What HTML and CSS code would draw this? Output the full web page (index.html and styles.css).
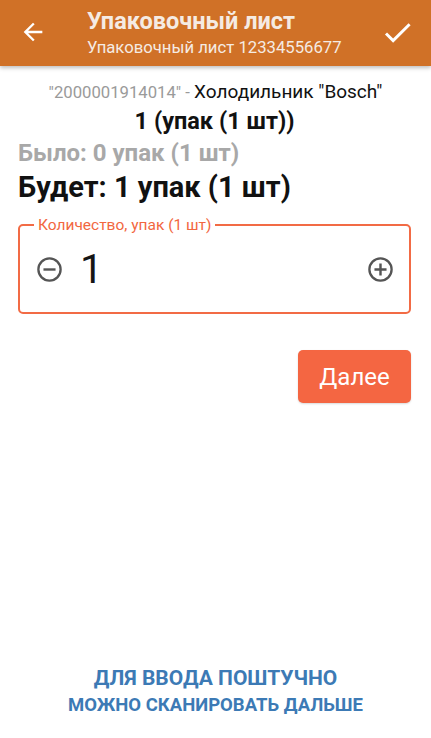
FILE: index.html
```html
<!DOCTYPE html>
<html lang="ru">
<head>
<meta charset="utf-8">
<link rel="stylesheet" href="styles.css">
</head>
<body>
<div class="app">
  <header class="bar">
    <svg class="back" viewBox="0 0 24 24" width="28" height="28"><path d="M20 11H7.83l5.59-5.59L12 4l-8 8 8 8 1.41-1.41L7.83 13H20v-2z" fill="#fff"/></svg>
    <div class="titles">
      <div class="title">Упаковочный лист</div>
      <div class="subtitle">Упаковочный лист 12334556677</div>
    </div>
    <svg class="check" viewBox="0 0 24 24" width="35" height="35"><path d="M9 16.17L4.83 12l-1.42 1.41L9 19 21 7l-1.41-1.41z" fill="#fff"/></svg>
  </header>
  <main class="content">
    <div class="product"><span class="code">"2000001914014" - </span>Холодильник "Bosch"</div>
    <div class="qty">1 (упак (1 шт))</div>
    <div class="was">Было: 0 упак (1 шт)</div>
    <div class="will">Будет: 1 упак (1 шт)</div>
    <div class="field">
      <span class="label">Количество, упак (1 шт)</span>
      <svg viewBox="0 0 24 24" width="29" height="29"><circle cx="12" cy="12" r="9.2" fill="none" stroke="#555" stroke-width="1.9"/><path d="M7 12h10" stroke="#555" stroke-width="2"/></svg>
      <span class="value">1</span>
      <svg viewBox="0 0 24 24" width="29" height="29"><circle cx="12" cy="12" r="9.2" fill="none" stroke="#555" stroke-width="1.9"/><path d="M7 12h10M12 7v10" stroke="#555" stroke-width="2"/></svg>
    </div>
    <div class="actions"><button class="next">Далее</button></div>
  </main>
  <footer class="hint">
    <div class="h1">ДЛЯ ВВОДА ПОШТУЧНО</div>
    <div class="h2">МОЖНО СКАНИРОВАТЬ ДАЛЬШЕ</div>
  </footer>
</div>
</body>
</html>
```
FILE: styles.css
```css
* { box-sizing: border-box; }
html, body { margin: 0; padding: 0; background: #fff; }
body { font-family: Roboto, "Noto Sans", sans-serif; }
.app { width: 431px; height: 738px; display: flex; flex-direction: column; }
.bar {
  height: 66px; background: #d07127; display: flex; align-items: center;
  box-shadow: 0 2px 4px rgba(0,0,0,0.25); flex-shrink: 0;
}
.back { margin-left: 19px; margin-right: 40px; margin-top: -2px; }
.titles { flex: 1; display: flex; flex-direction: column; }
.title { font-size: 23.5px; font-weight: 700; line-height: 28px; color: #f5ebe3; }
.subtitle { font-size: 16.7px; line-height: 22px; color: #f5ebe3; margin-top: 2px; }
.check { margin-right: 16px; margin-top: -2px; }
.content { padding: 0 20px 0 18px; flex: 1; }
.product { text-align: center; font-size: 19px; margin-top: 14px; line-height: 24px; color: #111; padding-left: 2px; }
.code { color: #9a9a9a; font-size: 16.7px; }
.qty { text-align: center; font-size: 23.5px; font-weight: 700; line-height: 28px; margin-top: 2px; color: #111; }
.was { font-size: 24px; font-weight: 700; color: #a8a8a8; line-height: 30px; margin-top: 3px; }
.will { font-size: 29px; font-weight: 700; color: #111; line-height: 34px; margin-top: 2px; }
.field {
  position: relative; margin-top: 20px; border: 2px solid #f26b45; border-radius: 5px;
  height: 90px; display: flex; align-items: center; padding: 0 14px 0 15px;
}
.label {
  position: absolute; top: -10px; left: 14px; background: #fff; padding: 0 4px;
  color: #f2673f; font-size: 15.5px; line-height: 18px;
}
.value { flex: 1; font-size: 41px; color: #151515; margin-left: 16px; line-height: 46px; }
.actions { display: flex; justify-content: flex-end; margin-top: 36px; }
.next {
  width: 113px; height: 53px; background: #f46642; color: #fff; border: none;
  border-radius: 5px; font-family: Roboto, sans-serif; font-size: 24px; box-shadow: 0 1px 2px rgba(0,0,0,0.15);
}
.hint { text-align: center; color: #3c7ab5; font-weight: 700; padding-bottom: 20px; }
.h1 { font-size: 21px; line-height: 27px; }
.h2 { font-size: 18.5px; line-height: 26px; }
```
